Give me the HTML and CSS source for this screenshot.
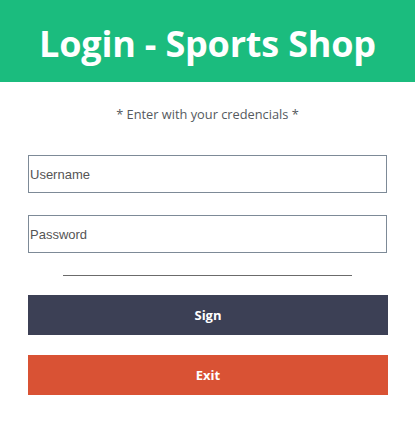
FILE: index.html
```html
<!DOCTYPE html>
<html lang="en">
<head>
<meta charset="utf-8">
<title>Login - Sports Shop</title>
<link rel="stylesheet" href="styles.css">
</head>
<body>
<header class="header">
  <h1 class="title">Login - Sports Shop</h1>
</header>
<main class="content">
  <p class="subtitle">* Enter with your credencials *</p>
  <form class="form">
    <input class="field" type="text" placeholder="Username">
    <input class="field" type="password" placeholder="Password">
    <hr class="divider">
    <button class="btn btn-sign" type="button">Sign</button>
    <button class="btn btn-exit" type="button">Exit</button>
  </form>
</main>
</body>
</html>
```
FILE: styles.css
```css
html, body {
  margin: 0;
  padding: 0;
  background: #ffffff;
}
body {
  font-family: "Open Sans", "Noto Sans", sans-serif;
}
.header {
  background: #1bbc7e;
  height: 82px;
  display: flex;
  align-items: center;
  justify-content: center;
}
.title {
  margin: 0;
  color: #ffffff;
  font-size: 36px;
  font-weight: 700;
  letter-spacing: -0.2px;
  line-height: 1;
  padding-top: 5px;
}
.content {
  padding: 0 28px;
}
.subtitle {
  margin: 24px 0 0;
  text-align: center;
  font-size: 12.8px;
  color: #555a60;
  line-height: 16px;
}
.form {
  display: flex;
  flex-direction: column;
  margin-top: 33px;
}
.field {
  box-sizing: border-box;
  width: 359px;
  height: 38px;
  border: 1px solid #7d8a97;
  padding: 0 1px;
  margin: 0 0 22px;
  font-family: "Liberation Sans", Arial, sans-serif;
  font-size: 13px;
  color: #333;
  outline: none;
}
.field:last-of-type {
  margin-bottom: 0;
}
.field::placeholder {
  color: #555555;
  opacity: 1;
}
.divider {
  align-self: center;
  width: 289px;
  margin: 22px 0 19px;
  border: 0;
  border-top: 1px solid #6b6b6b;
  height: 0;
}
.btn {
  box-sizing: border-box;
  width: 360px;
  height: 40px;
  border: 0;
  color: #ffffff;
  font-family: "Open Sans", "Noto Sans", sans-serif;
  font-weight: 700;
  font-size: 13px;
  cursor: pointer;
}
.btn-sign {
  background: #3c4055;
  margin-bottom: 20px;
}
.btn-exit {
  background: #d95234;
}
```
